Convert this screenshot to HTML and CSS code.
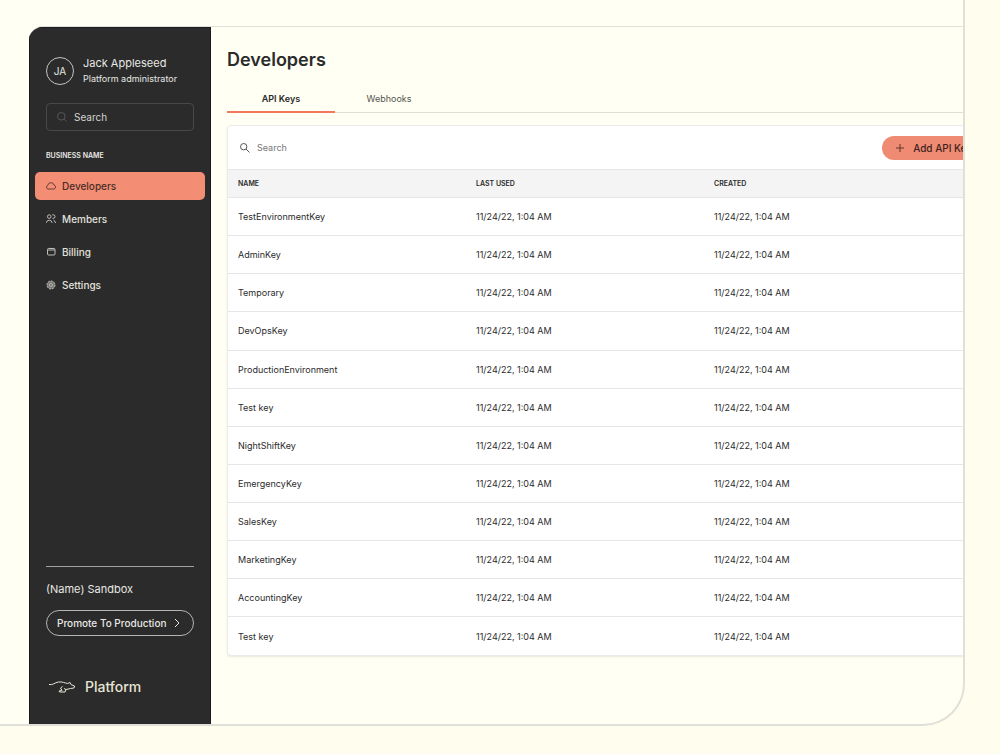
FILE: index.html
```html
<!DOCTYPE html>
<html lang="en">
<head>
<meta charset="utf-8">
<meta name="viewport" content="width=device-width, initial-scale=1">
<title>Developers</title>
<link rel="stylesheet" href="styles.css">
</head>
<body>
<div class="stage">
  <div class="app">
    <aside class="sidebar">
      <div class="profile">
        <span class="avatar">JA</span>
        <div>
          <div class="profile-name">Jack Appleseed</div>
          <div class="profile-role">Platform administrator</div>
        </div>
      </div>
      <label class="side-search">
        <svg class="icon" viewBox="0 0 12 12" aria-hidden="true"><circle cx="5.3" cy="5.3" r="3.8"/><path d="M8.2 8.2L10.5 10.5"/></svg>
        <input type="text" placeholder="Search" aria-label="Search menu">
      </label>
      <div class="business">BUSINESS NAME</div>
      <nav class="menu">
        <a class="menu-item active" href="#developers">
          <svg class="icon" viewBox="0 0 12 12" aria-hidden="true"><path d="M3 9A2 2 0 0 1 2.8 5.200A3.2 3.2 0 0 1 9 5A2.100 2.100 0 0 1 9.2 9Z"/></svg>
          Developers
        </a>
        <a class="menu-item" href="#members">
          <svg class="icon" viewBox="0 0 12 12" aria-hidden="true"><circle cx="4.2" cy="3.6" r="1.800"/><path d="M1.500 10V9.400Q1.700 7.4 4.2 7.2Q6.700 7.4 7 9.400V10M7.2 1.8H8.2A1.8 1.8 0 0 1 8.2 5.400H7.5M8.500 7.2Q10.300 7.8 10.500 10"/></svg>
          Members
        </a>
        <a class="menu-item" href="#billing">
          <svg class="icon" viewBox="0 0 12 12" aria-hidden="true"><rect x="2.500" y="2.5" width="7.500" height="6.500" rx="1"/><path d="M2.500 4H10M4.500 1.8V3M8 1.8V3"/></svg>
          Billing
        </a>
        <a class="menu-item" href="#settings">
          <svg class="icon" viewBox="0 0 12 12" aria-hidden="true"><circle class="gear-body" cx="6" cy="6" r="4"/><circle class="gear-teeth" cx="6" cy="6" r="4"/><circle class="gear-hub" cx="6" cy="6" r="1.6"/></svg>
          Settings
        </a>
      </nav>
      <div class="side-foot">
        <div class="sandbox">(Name) Sandbox</div>
        <button class="promote" type="button">
          Promote To Production
          <svg class="chevron" viewBox="0 0 8 10" aria-hidden="true"><path d="M2 1L6 5L2 9"/></svg>
        </button>
        <div class="brand">
          <svg class="brand-mark" viewBox="0 0 28 14" aria-hidden="true"><path d="M1 4.500C5 5.500 6.500 2.500 10.500 2C14 1.500 17 3 19.500 3.500L22 2.500L23 4.500L26.500 6L26 8L22.500 8.500L18 9.500L17 12H11.500L11 11L14 10.500L12.500 8L14.500 6.500M18 9.500L16 8.500"/></svg>
          Platform
        </div>
      </div>
    </aside>
    <main class="main">
      <h1 class="title">Developers</h1>
      <div class="tabs" role="tablist">
        <button class="tab selected" type="button" role="tab" aria-selected="true">API Keys</button>
        <button class="tab" type="button" role="tab" aria-selected="false">Webhooks</button>
      </div>
      <section class="card">
        <div class="toolbar">
          <label class="table-search">
            <svg class="icon" viewBox="0 0 12 12" aria-hidden="true"><circle cx="4.700" cy="4.700" r="3.200"/><path d="M7 7L10.500 10.500"/></svg>
            <input type="text" placeholder="Search" aria-label="Search API keys">
          </label>
          <button class="add" type="button">
            <svg class="plus" viewBox="0 0 10 10" aria-hidden="true"><path d="M5 1V9M1 5H9"/></svg>
            Add API Key
          </button>
        </div>
        <table class="keys">
          <thead><tr><th scope="col">NAME</th><th scope="col">LAST USED</th><th scope="col">CREATED</th></tr></thead>
          <tbody>
            <tr><td>TestEnvironmentKey</td><td>11/24/22, 1:04 AM</td><td>11/24/22, 1:04 AM</td></tr>
            <tr><td>AdminKey</td><td>11/24/22, 1:04 AM</td><td>11/24/22, 1:04 AM</td></tr>
            <tr><td>Temporary</td><td>11/24/22, 1:04 AM</td><td>11/24/22, 1:04 AM</td></tr>
            <tr><td>DevOpsKey</td><td>11/24/22, 1:04 AM</td><td>11/24/22, 1:04 AM</td></tr>
            <tr><td>ProductionEnvironment</td><td>11/24/22, 1:04 AM</td><td>11/24/22, 1:04 AM</td></tr>
            <tr><td>Test key</td><td>11/24/22, 1:04 AM</td><td>11/24/22, 1:04 AM</td></tr>
            <tr><td>NightShiftKey</td><td>11/24/22, 1:04 AM</td><td>11/24/22, 1:04 AM</td></tr>
            <tr><td>EmergencyKey</td><td>11/24/22, 1:04 AM</td><td>11/24/22, 1:04 AM</td></tr>
            <tr><td>SalesKey</td><td>11/24/22, 1:04 AM</td><td>11/24/22, 1:04 AM</td></tr>
            <tr><td>MarketingKey</td><td>11/24/22, 1:04 AM</td><td>11/24/22, 1:04 AM</td></tr>
            <tr><td>AccountingKey</td><td>11/24/22, 1:04 AM</td><td>11/24/22, 1:04 AM</td></tr>
            <tr><td>Test key</td><td>11/24/22, 1:04 AM</td><td>11/24/22, 1:04 AM</td></tr>
          </tbody>
        </table>
      </section>
    </main>
  </div>
</div>
</body>
</html>
```
FILE: styles.css
```css
* { box-sizing: border-box; }

body {
  margin: 0;
  min-height: 100vh;
  display: flex;
  padding: 0 35px 28px 0;
  background: #fffdee;
  font-family: Inter, "Liberation Sans", sans-serif;
  font-size: 9px;
  color: #2b2b2b;
}

button, input { font: inherit; color: inherit; }
svg { fill: none; stroke: currentColor; flex: none; }
.icon { width: 12px; height: 12px; }

.stage {
  flex: 1;
  min-width: 0;
  display: flex;
  padding: 26px 0 0 29px;
  background: #fffff3;
  border: solid #e0e0d8;
  border-width: 0 2px 2px 0;
  border-radius: 0 0 42px 0;
  overflow: hidden;
}

/* The window runs past the right edge of the stage. */
.app {
  flex: 1 0 auto;
  width: calc(100% + 48px);
  display: flex;
  border-top: 1px solid #e2e2da;
  border-top-left-radius: 14px;
  overflow: hidden;
}

.sidebar {
  width: 182px;
  flex: none;
  display: flex;
  flex-direction: column;
  padding: 27px 16px 29px;
  background: #2b2b2b;
  border: 1px solid #1c1c1e;
  border-bottom: 0;
  color: #e8e8e4;
}

.profile { display: flex; align-items: center; gap: 9px; padding-bottom: 16px; }
.avatar {
  width: 28px;
  height: 28px;
  display: grid;
  place-items: center;
  border: 1px solid #c4c4c0;
  border-radius: 50%;
  font-size: 10px;
}
.profile-name { font-size: 11px; line-height: 16px; }
.profile-role { font-size: 9px; line-height: 16px; white-space: nowrap; }

.side-search {
  height: 28px;
  display: flex;
  align-items: center;
  gap: 6px;
  padding: 0 9px;
  border: 1px solid #484848;
  border-radius: 4px;
  color: #585858;
}
.side-search input, .table-search input {
  width: 100%;
  min-width: 0;
  padding: 0;
  border: 0;
  outline: 0;
  background: none;
}
.side-search input { font-size: 10px; color: #e0e0dc; }
.side-search input::placeholder { color: #d4d4d0; opacity: 1; }

.business { padding: 20px 0 11px; font-size: 7px; line-height: 10px; font-weight: 600; }

.menu { display: grid; gap: 5px; margin: 0 -11px; }
.menu-item {
  height: 28px;
  display: flex;
  align-items: center;
  gap: 5px;
  padding: 0 10px;
  border-radius: 5px;
  font-size: 10px;
  font-weight: 500;
  color: #e2e2de;
  text-decoration: none;
}
.menu-item .icon { opacity: 0.8; }
.menu-item.active { background: #f38d74; color: #4a2d27; }
.gear-body { fill: #8a8a88; stroke: none; }
.gear-teeth { stroke-dasharray: 2 1; }
.gear-hub { stroke: #d0d0cc; }

.side-foot { margin-top: auto; border-top: 1px solid #a0a09c; }
.sandbox { padding: 14px 0 13px; font-size: 11px; line-height: 16px; }
.promote {
  width: 100%;
  height: 26px;
  display: flex;
  align-items: center;
  justify-content: space-between;
  padding: 0 12px 0 10px;
  border: 1px solid #b4b4b0;
  border-radius: 13px;
  background: none;
  font-size: 10px;
  font-weight: 500;
  white-space: nowrap;
}
.chevron { width: 8px; height: 10px; }
.brand {
  display: flex;
  align-items: center;
  gap: 9px;
  padding-top: 43px;
  padding-left: 2px;
  font-size: 14px;
  line-height: 16px;
  font-weight: 500;
  color: #e6e5d4;
}
.brand-mark { width: 28px; height: 14px; }

.main { flex: 1; min-width: 0; padding: 21px 16px 0; }
.title { margin: 0; font-size: 18px; line-height: 24px; font-weight: 600; }

.tabs { display: flex; margin-top: 14px; border-bottom: 1px solid #dfdfd7; }
.tab {
  width: 108px;
  height: 27px;
  padding: 0;
  margin-bottom: -1px;
  border: 0;
  border-bottom: 2px solid transparent;
  background: none;
  color: #55554f;
}
.tab.selected { border-bottom-color: #f4775e; color: #2b2b2b; font-weight: 600; }

.card {
  margin-top: 12px;
  background: #fff;
  border: 1px solid #ebebe9;
  border-radius: 4px;
  box-shadow: 0 1px 2px #00000018;
}
.toolbar {
  height: 43px;
  display: flex;
  align-items: center;
  justify-content: space-between;
  padding: 0 10px 0 11px;
}
.table-search { display: flex; align-items: center; gap: 6px; color: #555; }
.table-search input::placeholder { color: #777; opacity: 1; }
.add {
  height: 24px;
  display: flex;
  align-items: center;
  gap: 8px;
  padding: 0 12px 0 13px;
  border: 0;
  border-radius: 12px;
  background: #f08b73;
  color: #40231d;
  font-size: 10px;
  font-weight: 500;
  white-space: nowrap;
}
.plus { width: 10px; height: 10px; opacity: 0.8; }

.keys { width: 100%; height: 486px; table-layout: fixed; border-collapse: collapse; }
.keys th, .keys td { padding: 0 10px; text-align: left; }
.keys th:nth-child(-n+2) { width: 238px; }
.keys th {
  height: 28px;
  background: #f4f4f4;
  border: solid #e6e6e6;
  border-width: 1px 0;
  font-size: 7px;
  font-weight: 600;
}
.keys td { height: 38px; border-bottom: 1px solid #e6e6e6; }
.keys tr:last-child td { border-bottom: 0; }
```
